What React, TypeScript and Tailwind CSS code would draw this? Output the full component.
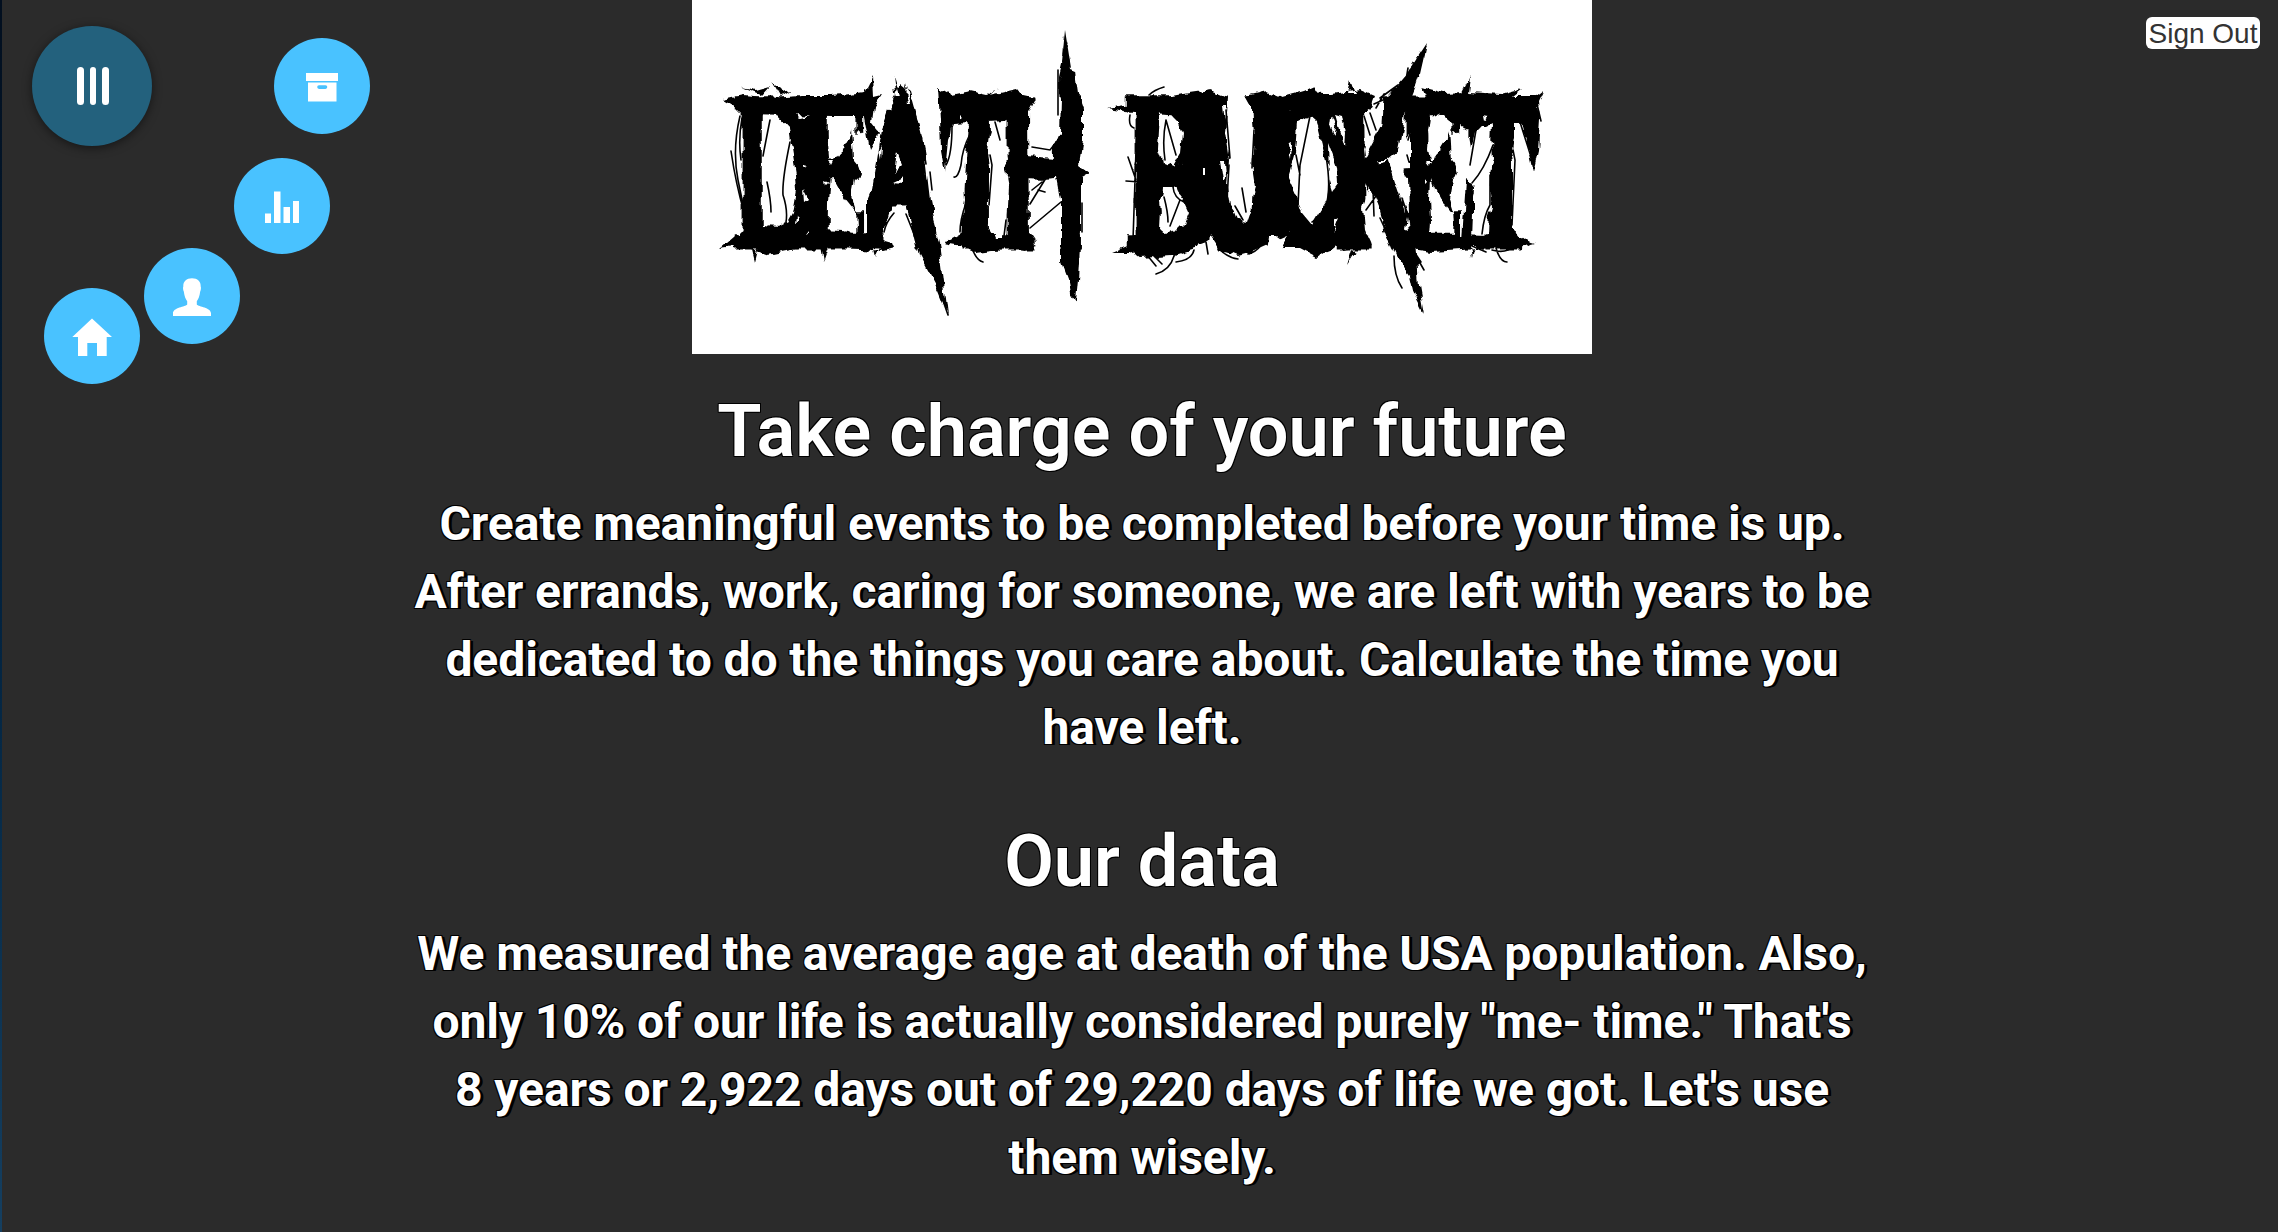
import type { ReactNode } from "react";

// Letters are condensed horizontally; positions are in logo units before scaling.
const SQUEEZE = 0.46;
const WORDS = [
  { text: "DEATH", xs: [38, 104, 172, 252, 303] },
  { text: "BUCKET", xs: [431, 496, 584, 639, 701, 775] },
];

const SHARDS = [
  "M28 249 L48 232 L70 226 L150 230 L200 244 L202 249 L190 252 L170 250 L130 247 L100 250 L76 255 L50 246 Z",
  "M30 100 L52 95 L78 98 L110 96 L140 96 L173 92 L181 76 L182 96 L190 94 L182 106 L180 122 L188 132 L178 150 L172 116 L140 116 L60 114 L50 112 Z",
  "M50 87 L64 90 L78 86 L70 95 Z M79 81 L90 92 L100 90 L88 97 Z",
  "M59 246 L63 262 L67 246 Z M128 246 L131 263 L137 246 Z M180 246 L183 258 L188 246 Z",
  "M98 120 L118 116 L134 120 L138 170 L134 236 L100 236 L104 200 L104 160 Z",
  "M180 190 L190 130 L204 92 L208 84 L218 92 L231 140 L238 200 L248 250 L256 315 L246 290 L228 256 L214 204 L200 204 L190 236 L176 238 L176 200 Z",
  "M201 76 L204 100 L208 100 Z M213 82 L214 104 L219 104 Z",
  "M246 88 L258 95 L278 91 L296 95 L306 87 L298 95 L325 89 L330 95 L344 98 L336 110 L330 120 L262 124 L256 140 L253 172 L249 150 L248 120 Z",
  "M276 120 L298 120 L296 228 L304 240 L270 242 Z M318 110 L336 110 L337 240 L318 240 Z",
  "M373 34 L375 50 L378 70 L383 72 L386 95 L391 110 L391 140 L387 165 L398 173 L389 178 L389 230 L386 280 L384 302 L379 294 L376 278 L370 262 L370 220 L368 170 L367 75 L371 58 Z",
  "M333 156 L362 158 L380 166 L384 180 L330 178 Z M302 165 L312 169 L320 162 L320 188 L312 184 L316 176 Z",
  "M252 243 L272 232 L330 236 L346 246 L332 250 L324 248 L300 250 L284 252 L270 246 Z",
  "M414 108 L440 104 L490 94 L518 90 L524 92 L536 97 L534 112 L540 150 L536 200 L520 240 L492 250 L498 200 L488 175 L494 130 L486 116 L442 112 Z",
  "M446 110 L468 112 L466 150 L474 172 L490 176 L486 188 L470 188 L468 230 L480 240 L445 242 Z",
  "M420 252 L446 242 L510 236 L506 248 L480 256 L448 258 L440 252 Z",
  "M508 100 L531 100 L534 190 L545 220 L555 222 L566 190 L562 110 L552 100 L576 92 L586 98 L600 98 L598 235 L578 244 L560 252 L545 256 L525 248 L508 225 Z",
  "M550 98 L576 92 L590 98 L612 92 L623 87 L625 94 L640 94 L668 90 L682 96 L676 112 L640 110 L638 125 L652 165 L648 240 L625 257 L608 248 L590 248 L588 250 L600 230 L590 180 L600 110 L560 108 Z",
  "M653 95 L672 100 L674 240 L680 246 L650 250 L650 180 L640 140 Z M640 200 L655 190 L655 240 L636 240 Z",
  "M734 44 L728 72 L722 90 L714 110 L706 150 L694 160 L674 160 L690 130 L692 100 L716 72 Z",
  "M676 165 L696 160 L706 190 L716 220 L724 240 L727 286 L732 314 L722 294 L718 276 L704 256 L696 236 Z",
  "M718 100 L738 112 L736 150 L742 175 L738 236 L718 240 Z",
  "M140 160 L156 148 L160 128 L162 160 L172 172 L163 180 L160 198 L165 214 L152 198 L142 180 Z M737 160 L753 148 L757 128 L759 160 L769 172 L760 180 L757 198 L762 214 L749 198 L739 180 Z",
  "M729 87 L752 93 L770 92 L778 76 L776 92 L808 94 L830 88 L820 96 L842 96 L851 89 L846 100 L848 120 L846 150 L841 172 L836 150 L828 122 L800 122 L788 128 L781 160 L776 130 L740 112 Z",
  "M800 120 L821 120 L821 230 L834 240 L844 243 L832 246 L800 248 L740 252 L700 246 L740 234 L796 236 Z M774 180 L782 186 L780 240 L770 240 Z",
  "M658 80 L655 94 L663 94 Z M660 250 L655 266 L664 252 Z M778 246 L780 258 L783 246 Z",
];

const E_GAPS =
  "M142 116 L155 116 L162 123 L158 137 L146 157 L140 143 L139 130 Z M165 130 L173 137 L175 150 L183 167 L178 173 L175 190 L173 203 L165 205 L161 193 L168 173 L163 157 L164 140 Z M141 178 L145 190 L153 202 L164 215 L165 227 L153 232 L141 218 L140 200 Z M137 160 L142 160 L140 164 Z M133 180 L137 182 L134 185 Z";

const GAPS = [
  "M86 116 L97 128 L99 143 L104 173 L105 190 L101 213 L96 222 L86 218 L79 208 L77 183 L72 157 L78 137 Z",
  "M192 229 L199 215 L214 206 L220 230 L228 262 L204 247 Z M205 153 L210 165 L202 173 Z M200 182 L211 177 L210 183 Z",
  "M183 104 L196 100 L194 115 L188 128 L183 118 Z M187 150 L190 145 L189 160 Z",
  "M222 92 L243 88 L246 127 L250 172 L261 177 L271 177 L273 200 L268 230 L253 236 L248 247 L240 213 L240 187 L235 167 L228 127 Z",
  "M260 127 L276 126 L270 147 L263 175 L254 170 Z M268 116 L271 119 L268 121 Z",
  "M301 122 L306 122 L310 143 L316 160 L313 165 L317 187 L316 207 L311 237 L303 237 L297 223 L300 187 L295 153 L297 133 Z",
  "M340 88 L366 88 L368 100 L367 133 L361 147 L358 157 L343 157 L341 133 L337 113 L344 100 Z",
  "M337 180 L365 178 L369 200 L369 262 L348 262 L346 245 L338 233 Z",
  "M478 115 L486 123 L490 133 L488 153 L480 167 L471 163 L468 147 L471 127 Z",
  "M473 187 L481 187 L491 200 L497 213 L493 223 L483 233 L475 227 L469 213 L468 200 Z",
  "M538 88 L550 92 L560 110 L562 133 L560 167 L563 187 L555 213 L550 222 L538 207 L535 187 L537 160 L533 133 Z",
  "M528 162 L533 162 L534 178 L531 182 Z M530 106 L534 106 L532 122 Z M511 170 L514 170 L514 174 L511 174 Z M595 145 L599 143 L598 158 Z",
  "M605 123 L618 116 L625 122 L638 177 L635 200 L620 225 L610 213 L605 197 L596 177 L603 153 Z",
  "M573 260 L576 236 L584 236 L592 242 L586 260 Z M514 260 L517 234 L526 248 L532 262 Z",
  "M643 115 L650 117 L653 133 L652 147 Z M636 143 L645 167 L646 183 L641 190 L637 177 Z M642 222 L647 219 L642 232 Z",
  "M673 113 L691 100 L685 130 L680 143 L675 130 Z M672 148 L676 151 L673 155 Z M678 187 L686 207 L696 245 L681 247 L673 230 L671 207 Z",
  "M712 140 L719 133 L719 167 L706 168 L698 163 Z M705 175 L717 177 L718 213 L710 197 Z M715 218 L717 230 L713 228 Z",
  "M791 125 L800 125 L795 140 L785 167 L780 183 L775 167 L783 133 Z M789 115 L795 116 L790 120 Z",
  "M800 140 L801 160 L796 180 L800 207 L791 235 L781 227 L781 197 L791 170 Z",
  "M823 123 L830 123 L840 173 L845 174 L845 236 L828 237 L821 227 L823 173 L819 150 Z",
  "M72 215 L80 223 L76 227 Z M104 214 L107 217 L103 224 Z M111 190 L116 200 L112 203 Z M118 230 L118 233 L115 234 Z M110 164 L114 165 L110 167 Z",
];

const SCRATCHES = [
  "M48 116 Q40 150 46 180 L53 214 M39 151 Q44 185 52 212 M78 120 Q74 140 71 156 M98 142 Q90 180 91 195 Q96 210 94 222 M75 182 Q79 200 79 212 M50 118 Q46 140 49 160",
  "M219 100 Q230 140 234 164 M222 130 L232 168 M226 240 L236 268 M232 236 Q244 270 248 274 M202 213 Q194 222 192 232 M214 214 L222 234 M248 292 L256 315 M238 172 L240 190",
  "M260 126 Q260 155 254 165 M278 134 Q270 150 269 165 Q266 178 262 177 M274 203 Q268 220 268 232 M298 155 L300 165 L297 205 M303 122 L308 140 M314 220 L312 236",
  "M338 228 L369 202 M338 204 L354 178 M340 147 L358 150 L366 140 M366 70 L366 115 M390 203 L390 232 M346 190 L353 192 M340 190 L350 182",
  "M280 248 Q284 260 291 262 M457 95 Q462 90 472 87 M438 115 Q436 126 442 128 M434 181 L448 182 M436 157 L444 180 M445 120 L441 240 M449 130 L443 165",
  "M474 120 L484 155 M474 120 Q470 140 473 160 M472 197 Q476 212 476 222 M488 200 L478 226 M481 187 Q482 198 492 202 M534 110 L538 158 M537 165 L535 200",
  "M464 274 Q478 270 482 256 M455 255 L464 266 M462 256 L470 264 M484 262 Q500 260 502 250 M526 248 Q536 258 546 259 M556 254 Q572 250 574 230 M514 242 L516 254",
  "M550 188 L554 212 M543 206 L551 220 M618 116 L608 165 L606 205 M604 155 L608 175 M626 122 Q642 178 634 206 Q626 220 620 222 M562 130 L560 168",
  "M660 122 L653 164 M672 116 L678 135 M678 113 L684 130 M684 108 L692 94 M682 104 L700 96 L700 90 M706 85 L688 98 M716 68 L714 80 M674 210 L684 196 M681 190 L682 216 M688 218 L700 244",
  "M702 256 Q702 276 710 288 M724 256 L732 270 M721 250 L729 262 M801 145 Q792 170 780 183 M798 175 L798 205 Q792 215 790 234 M821 150 L823 160 L820 225 M844 100 L849 121",
  "M804 248 Q808 262 815 262 M784 130 L778 165 M828 122 L840 160 M780 246 L794 252 M715 155 L717 162 M800 250 Q814 254 822 246 M722 120 L716 140 M710 198 L716 216",
];

function Logo() {
  return (
    <svg viewBox="0 0 900 354" className="block h-[354px] w-[900px] bg-white" role="img" aria-label="Death Bucket">
      <defs>
        <filter id="rough" x="-5%" y="-5%" width="110%" height="110%">
          <feTurbulence type="fractalNoise" baseFrequency="0.11 0.07" numOctaves="2" seed="7" result="noise" />
          <feDisplacementMap in="SourceGraphic" in2="noise" scale="8" xChannelSelector="R" yChannelSelector="G" />
        </filter>
      </defs>
      <g filter="url(#rough)">
        <g fontFamily="'DejaVu Serif', serif" fontWeight="700" stroke="#000" strokeWidth="3">
          {WORDS.map((w) => (
            <text
              key={w.text}
              x={w.xs.map((x) => x / SQUEEZE).join(" ")}
              y={248}
              fontSize={206}
              transform={`scale(${SQUEEZE} 1)`}
            >
              {w.text}
            </text>
          ))}
        </g>
        <path d={SHARDS.join(" ")} />
        <g fill="#fff">
          <path d={E_GAPS} />
          <path d={E_GAPS} transform="translate(597 0)" />
          <path d={GAPS.join(" ")} />
        </g>
      </g>
      <path d="M373 30 L370 62 L379 68 Z M735 43 L716 72 L728 74 Z" />
      <path d={SCRATCHES.join(" ")} fill="none" stroke="#000" strokeWidth="1.6" strokeLinecap="round" />
    </svg>
  );
}

function Bubble({ label, place, children }: { label: string; place: string; children: ReactNode }) {
  return (
    <a aria-label={label} className={`absolute flex size-24 items-center justify-center rounded-full bg-[#49c2ff] ${place}`}>
      <svg viewBox="0 0 96 96" className="size-24 fill-white">
        {children}
      </svg>
    </a>
  );
}

function RadialMenu() {
  return (
    <nav className="absolute top-0 left-0 size-[400px]">
      <button
        aria-label="Menu"
        className="absolute top-[26px] left-8 flex size-[120px] items-center justify-center gap-[6px] rounded-full bg-[#23617d] pl-[2px] shadow-[0_2px_10px_rgba(0,0,0,0.5)]"
      >
        <span className="h-[38px] w-[6.5px] rounded-full bg-white" />
        <span className="h-[38px] w-[6.5px] rounded-full bg-white" />
        <span className="h-[38px] w-[6.5px] rounded-full bg-white" />
      </button>
      <Bubble label="Archive" place="left-[274px] top-[38px]">
        <path d="M32 35H64V43H32Z" />
        <path fillRule="evenodd" d="M34 44.5H62.5V63.5H34ZM45 47.3a1.8 1.8 0 0 0 0 3.6h6.5a1.8 1.8 0 0 0 0-3.6Z" />
      </Bubble>
      <Bubble label="Stats" place="left-[234px] top-[158px]">
        <path d="M31 55.5H37V65H31ZM40 33.5H46.5V65H40ZM49.5 49H56V65H49.5ZM59 43H65V65H59Z" />
      </Bubble>
      <Bubble label="Profile" place="left-[144px] top-[248px]">
        <path d="M48 30.3C53.5 30.3 57 33.5 56.7 38.5C57.3 39.5 56.8 42.5 56.2 43.5C55.6 48 54.3 51.5 52.8 53.2V56.6C54.5 59 67 59.5 67 65.5V68H29V65.5C29 59.5 41.5 59 43.2 56.6V53.2C41.7 51.5 40.4 48 39.8 43.5C39.2 42.5 38.7 39.5 39.3 38.5C39 33.5 42.5 30.3 48 30.3Z" />
      </Bubble>
      <Bubble label="Home" place="left-[44px] top-[288px]">
        <path d="M48 30.5L68 49H62.7V68H53V55H43.3V68H34V49H28.3Z" />
      </Bubble>
    </nav>
  );
}

function Section({ title, children }: { title: string; children: ReactNode }) {
  return (
    <section className="flex flex-col items-center">
      <h1 className="text-[72px] leading-[86px] font-semibold [text-shadow:-1px_-1px_0_#000,1px_-1px_0_#000,-1px_1px_0_#000,1px_1px_0_#000]">
        {title}
      </h1>
      <h2 className="mt-[15px] text-[48px] leading-[68px] font-bold tracking-[-0.08px] [text-shadow:-1px_-1px_0_#000,1px_-1px_0_#000,-1px_1px_0_#000,1px_1px_0_#000,2px_1px_0_#000,3px_1px_0_#000]">
        {children}
      </h2>
    </section>
  );
}

export default function App() {
  return (
    <div className="flex h-[1232px] w-[2278px] overflow-hidden bg-[#2b2b2b] font-['Roboto',sans-serif] text-white">
      <div className="w-[2px] shrink-0 bg-linear-to-b from-[#020f1f] via-[#03233f] to-[#153f60]" />
      <main className="flex flex-1 flex-col items-center pl-1 text-center">
        <Logo />
        <div className="mt-[35px] flex flex-col gap-[57px]">
          <Section title="Take charge of your future">
            Create meaningful events to be completed before your time is up.
            <br />
            After errands, work, caring for someone, we are left with years to be
            <br />
            dedicated to do the things you care about. Calculate the time you
            <br />
            have left.
          </Section>
          <Section title="Our data">
            We measured the average age at death of the USA population. Also,
            <br />
            only 10% of our life is actually considered purely "me- time." That's
            <br />8 years or 2,922 days out of 29,220 days of life we got. Let's use
            <br />
            them wisely.
          </Section>
        </div>
      </main>
      <RadialMenu />
      <button className="absolute top-[17px] right-[18px] flex h-8 w-[114px] items-center justify-center rounded-md bg-white pt-px font-['Liberation_Sans',sans-serif] text-[28px] leading-8 whitespace-nowrap text-[#333]">
        Sign Out
      </button>
    </div>
  );
}
